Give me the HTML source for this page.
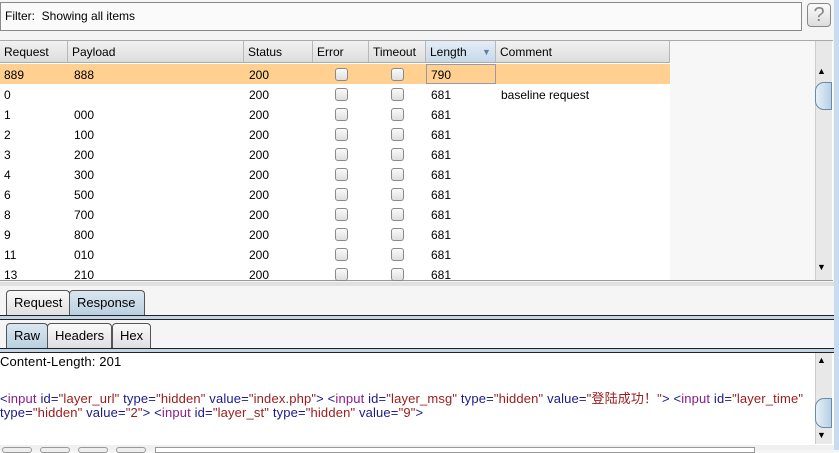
<!DOCTYPE html><html><head><style>
*{box-sizing:border-box;margin:0;padding:0}
body{width:839px;height:450px;background:#f5f5f5;font:12px "Liberation Sans","Noto Sans CJK SC",sans-serif;color:#000;position:relative;overflow:hidden}
.a{position:absolute}
.cb{position:absolute;width:13px;height:13px;border:1px solid #8a8a8a;border-radius:3px;background:linear-gradient(#fafafa,#dedede)}
.hd{position:absolute;top:41px;height:22px;line-height:22px;padding-left:4px;border-right:1px solid #b8b8b8;background:linear-gradient(#f2f2f2,#dcdcdc);border-bottom:1px solid #aaa}
.tab{position:absolute;height:26px;line-height:24px;padding:0 7px;border:1px solid #555;border-bottom:none;border-radius:4px 4px 0 0;background:linear-gradient(#fafafa,#dedede);font-size:13px}
.tab.on{background:linear-gradient(#dae6f0,#b8cfe0)}
.c{position:absolute;font-size:13px;letter-spacing:0.15px;white-space:nowrap}
.p{color:#8b1a8b}.n{color:#1a1a8b}.r{color:#9b1a1a}
</style></head><body>
<div class="a" style="left:834px;top:0;width:5px;height:450px;background:#c8dcef"></div>
<div class="a" style="left:0;top:2px;width:802px;height:29px;border:1px solid #8a8a8a;background:#fafafa;line-height:27px;padding-left:4px">Filter:&nbsp; Showing all items</div>
<div class="a" style="left:807px;top:3px;width:24px;height:24px;border:1px solid #888;border-radius:4px;background:linear-gradient(#fbfbfb,#ddd);text-align:center;font-size:20px;line-height:22px;color:#888">?</div>
<div class="a" style="left:0;top:40px;width:833px;height:241px;background:#fff;border-top:1px solid #aaa;border-bottom:1px solid #999"></div>
<div class="a" style="left:670px;top:41px;width:145px;height:239px;background:#f7f7f7"></div>
<div class="hd" style="left:0;width:68px">Request</div>
<div class="hd" style="left:68px;width:176px">Payload</div>
<div class="hd" style="left:244px;width:69px">Status</div>
<div class="hd" style="left:313px;width:56px">Error</div>
<div class="hd" style="left:369px;width:57px">Timeout</div>
<div class="hd" style="left:426px;width:70px;background:linear-gradient(#e4eef6,#c6d8e8)">Length<span style="position:absolute;left:56px;color:#5a7fa3;font-size:9px">▼</span></div>
<div class="hd" style="left:496px;width:174px">Comment</div>
<div class="a" style="left:815px;top:41px;width:17px;height:239px;background:#e8e8e8;border-left:1px solid #ccc"></div>
<div class="a" style="left:817px;top:66px;font-size:9px">▲</div>
<div class="a" style="left:817px;top:262px;font-size:9px">▼</div>
<div class="a" style="left:815px;top:82px;width:17px;height:28px;border:1px solid #6b8aa8;border-radius:9px 0 0 9px;background:linear-gradient(90deg,#e6f0f8,#b8d0e4)"></div>
<div class="a" style="left:0;top:64px;width:670px;height:20px;background:#ffd08f"></div>
<div class="a" style="left:426px;top:64px;width:70px;height:20px;border:1px solid #99a"></div>
<div id="rows"></div>
<script>
var d=[["889","888","790",""],["0","","681","baseline request"],["1","000","681",""],["2","100","681",""],["3","200","681",""],["4","300","681",""],["6","500","681",""],["8","700","681",""],["9","800","681",""],["11","010","681",""],["13","210","681",""]];
var h="";d.forEach(function(r,i){var y=64+i*20;h+='<div class="a" style="left:4px;top:'+(y+4)+'px">'+r[0]+'</div><div class="a" style="left:74px;top:'+(y+4)+'px">'+r[1]+'</div><div class="a" style="left:249px;top:'+(y+4)+'px">200</div><div class="cb" style="left:335px;top:'+(y+4)+'px"></div><div class="cb" style="left:391px;top:'+(y+4)+'px"></div><div class="a" style="left:431px;top:'+(y+4)+'px">'+r[2]+'</div><div class="a" style="left:501px;top:'+(y+4)+'px">'+r[3]+'</div>';});
document.getElementById("rows").innerHTML=h;
</script>
<div class="a" style="left:0;top:282px;width:834px;height:4px;background:#e0e0e0"></div>
<div class="tab" style="left:6px;top:290px">Request</div>
<div class="tab on" style="left:69px;top:290px;width:76px">Response</div>
<div class="a" style="left:0;top:315px;width:834px;height:5px;border-top:1px solid #222;border-bottom:1px solid #222;background:#c0d4e6"></div>
<div class="tab on" style="left:6px;top:323px">Raw</div>
<div class="tab" style="left:47px;top:323px">Headers</div>
<div class="tab" style="left:112px;top:323px">Hex</div>
<div class="a" style="left:0;top:348px;width:834px;height:5px;border-top:1px solid #222;border-bottom:1px solid #222;background:#c0d4e6"></div>
<div class="a" style="left:0;top:353px;width:834px;height:92px;background:#fff"></div>
<div class="c" style="left:0;top:354px">Content-Length: 201</div>
<div class="c" style="left:0;top:388px"><span class="n">&lt;</span><span class="p">input</span> <span class="n">id=</span><span class="r">"layer_url"</span> <span class="n">type=</span><span class="r">"hidden"</span> <span class="n">value=</span><span class="r">"index.php"</span><span class="n">&gt;</span> <span class="n">&lt;</span><span class="p">input</span> <span class="n">id=</span><span class="r">"layer_msg"</span> <span class="n">type=</span><span class="r">"hidden"</span> <span class="n">value=</span><span class="r">"登陆成功！"</span><span class="n">&gt;</span> <span class="n">&lt;</span><span class="p">input</span> <span class="n">id=</span><span class="r">"layer_time"</span></div>
<div class="c" style="left:0;top:405px"><span class="n">type=</span><span class="r">"hidden"</span> <span class="n">value=</span><span class="r">"2"</span><span class="n">&gt;</span> <span class="n">&lt;</span><span class="p">input</span> <span class="n">id=</span><span class="r">"layer_st"</span> <span class="n">type=</span><span class="r">"hidden"</span> <span class="n">value=</span><span class="r">"9"</span><span class="n">&gt;</span></div>
<div class="a" style="left:815px;top:353px;width:17px;height:91px;background:#e8e8e8;border-left:1px solid #ccc"></div>
<div class="a" style="left:817px;top:355px;font-size:9px">▲</div>
<div class="a" style="left:817px;top:430px;font-size:9px">▼</div>
<div class="a" style="left:815px;top:398px;width:17px;height:30px;border:1px solid #6b8aa8;border-radius:9px 0 0 9px;background:linear-gradient(90deg,#e6f0f8,#b8d0e4)"></div>
<div class="a" style="left:0;top:445px;width:834px;height:5px;background:#f0f0f0"></div>
<div class="a" style="left:2px;top:447px;width:30px;height:6px;border:1px solid #999;border-radius:3px;background:#eee"></div>
<div class="a" style="left:40px;top:447px;width:30px;height:6px;border:1px solid #999;border-radius:3px;background:#eee"></div>
<div class="a" style="left:78px;top:447px;width:30px;height:6px;border:1px solid #999;border-radius:3px;background:#eee"></div>
<div class="a" style="left:116px;top:447px;width:30px;height:6px;border:1px solid #999;border-radius:3px;background:#eee"></div>
<div class="a" style="left:155px;top:447px;width:600px;height:6px;border:1px solid #999;background:#fff"></div>
</body></html>
